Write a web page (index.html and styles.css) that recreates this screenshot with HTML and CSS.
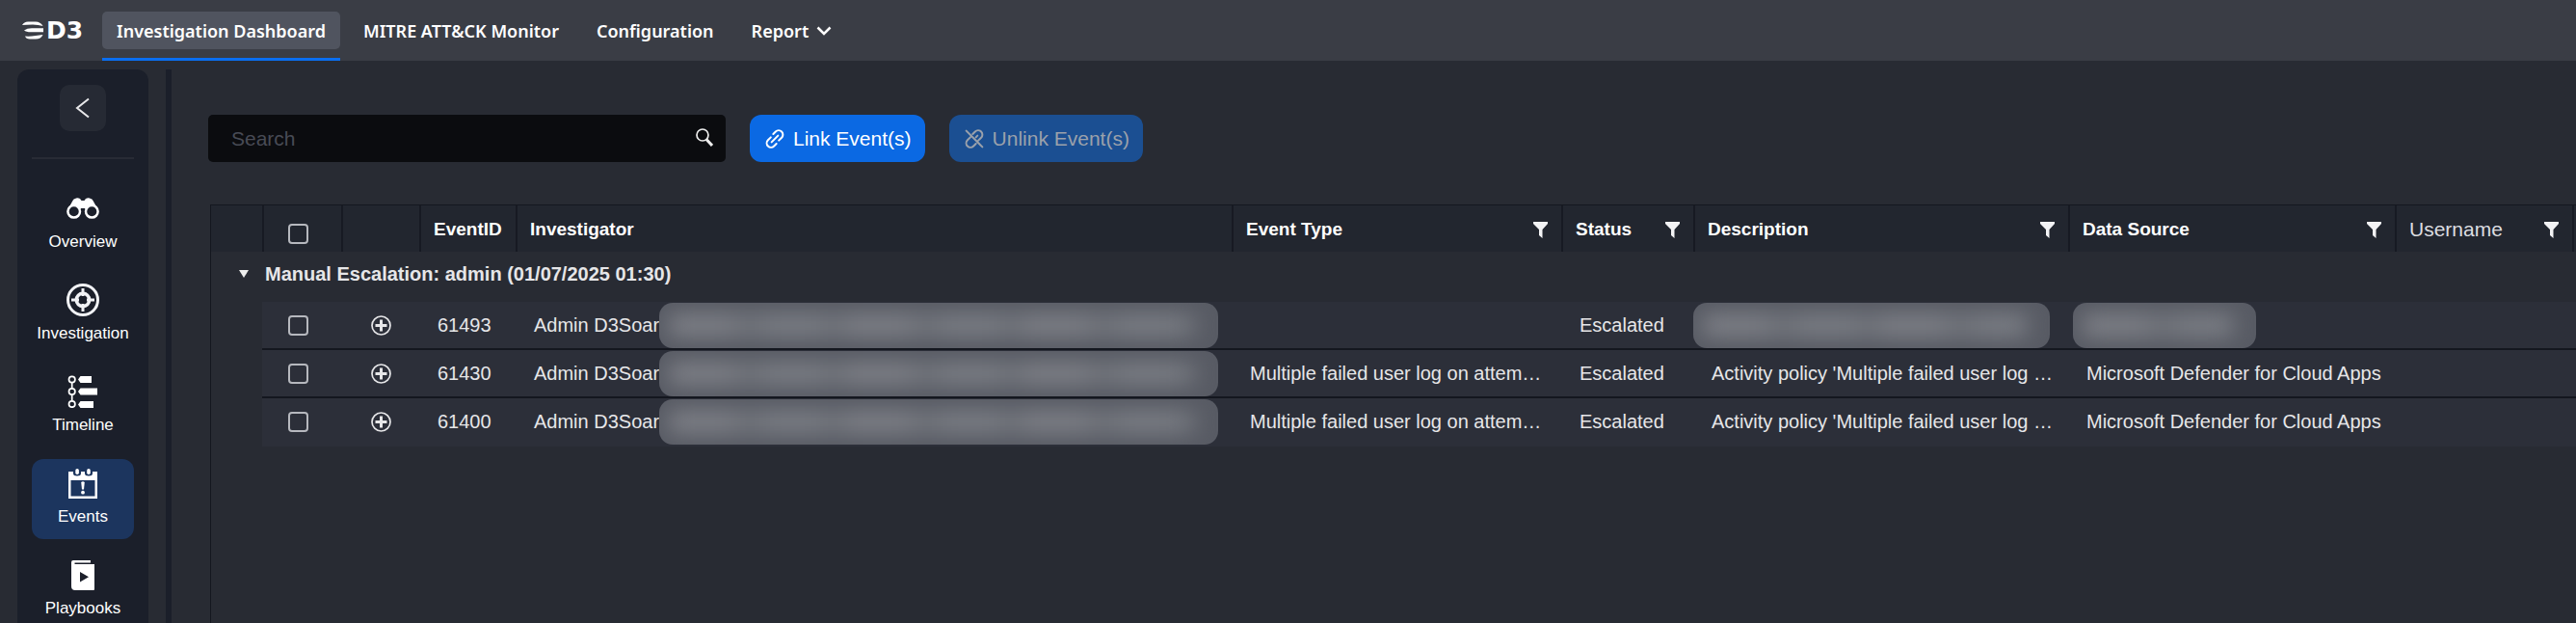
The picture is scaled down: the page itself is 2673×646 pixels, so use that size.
FILE: index.html
```html
<!DOCTYPE html>
<html lang="en">
<head>
    <meta charset="UTF-8">
    <meta name="viewport" content="width=device-width, initial-scale=1.0">
    <title>D3 Investigation Dashboard</title>
    <link rel="stylesheet" href="styles.css">
</head>
<body>
<svg class="sprite" width="0" height="0" aria-hidden="true">
    <symbol id="filter" viewBox="0 0 15 17">
        <path d="M0 0h15v2L9.500 8v9L6 14V8L0 2z" fill="currentColor"/>
    </symbol>
    <symbol id="plus" viewBox="0 0 21 21">
        <circle cx="10.500" cy="10.500" r="9.500" fill="none" stroke="currentColor" stroke-width="1.700"/>
        <path d="M10.500 4.500v12M4.500 10.500h12" stroke="currentColor" stroke-width="3"/>
    </symbol>
</svg>

<header class="topbar">
    <a class="logo" href="#" aria-label="D3 home">
        <svg width="24" height="19" viewBox="0 0 24 19" fill="#fff">
            <path d="M0 4Q2 .5 6 .5h8q5 0 7.500 4.500Q17 3.500 11 3.500 4 3.500 0 4z"/>
            <path d="M2 9.500Q5 7.300 10 7.300h12v4H9q-5 0-7-1.800z"/>
            <path d="M3 15.500q3 .3 7 0 6-.7 11.500-1.500-2 4.500-7.500 4.500H8q-4 0-5-3z"/>
        </svg>
        <span>D3</span>
    </a>
    <nav class="tabs">
        <a class="tab active" href="#"><span>Investigation Dashboard</span></a>
        <a class="tab" href="#"><span>MITRE ATT&amp;CK Monitor</span></a>
        <a class="tab" href="#"><span>Configuration</span></a>
        <a class="tab" href="#"><span>Report
            <svg width="16" height="10" viewBox="0 0 16 10"><path d="M1.500 1.500L8 8l6.500-6.500" fill="none" stroke="#fff" stroke-width="2.500"/></svg></span></a>
    </nav>
</header>

<div class="layout">
    <aside class="sidebar">
        <button class="collapse" type="button" aria-label="Collapse menu">
            <svg width="16" height="22" viewBox="0 0 16 22"><path d="M14 1.500L2 11l12 9.500" fill="none" stroke="#e8e8ea" stroke-width="2"/></svg>
        </button>
        <nav class="side-nav">
            <a class="side-item" href="#">
                <svg width="34" height="34" viewBox="0 0 34 34" fill="#fff">
                    <path d="M9 7q2-1.500 5 0l1.500 2h3L20 7q3-1.500 5 0 1.500 0 2.500 2l5 9-12 1-1.500-2h-4l-1.500 2-12-1 5-9q1-2 2.500-2z"/>
                    <g fill="#1b1f2a" stroke="#fff" stroke-width="2.500"><circle cx="7.700" cy="20.300" r="6.300"/><circle cx="26.300" cy="20.300" r="6.300"/></g>
                </svg>
                <span>Overview</span>
            </a>
            <a class="side-item" href="#">
                <svg width="34" height="34" viewBox="0 0 34 34" fill="none" stroke="#f1f2f5">
                    <circle cx="17" cy="17" r="15.500" stroke-width="3"/>
                    <circle cx="17" cy="17" r="6.700" stroke-width="3.500"/>
                    <path d="M17 5v8M17 21v8M5 17h8M21 17h8" stroke-width="3"/>
                </svg>
                <span>Investigation</span>
            </a>
            <a class="side-item" href="#">
                <svg width="34" height="34" viewBox="0 0 34 34" fill="#fff">
                    <path d="M12 4.500L14.500 1H26v7H14.500zM12 17l2.500-3.500H32v7H14.500zM12 30.500l2.500-3.500H28v7H14.500z"/>
                    <g fill="none" stroke="#fff" stroke-width="1.700"><circle cx="5.700" cy="4.500" r="3.200"/><circle cx="5.700" cy="17" r="3.200"/><circle cx="5.700" cy="30" r="3.200"/><path d="M5.700 8v6M5.700 20.500v6"/></g>
                </svg>
                <span>Timeline</span>
            </a>
            <a class="side-item active" href="#">
                <svg width="34" height="34" viewBox="0 0 34 34" fill="#fff">
                    <path fill-rule="evenodd" d="M2 5h5v2q0 2.500 4 2.500T15 7V5h4v2q0 2.500 4 2.500T27 7V5h5v28H2zM4.500 14v16.500h25V14z"/>
                    <rect x="9.300" y="2" width="3.600" height="6" rx="1.800"/>
                    <rect x="21.200" y="2" width="3.600" height="6" rx="1.800"/>
                    <path d="M15.200 16q1.800-1.500 3.600 0l-.8 7.500h-2z"/>
                    <circle cx="17" cy="26.700" r="1.900"/>
                </svg>
                <span>Events</span>
            </a>
            <a class="side-item" href="#">
                <svg width="34" height="34" viewBox="0 0 34 34" fill="#fff">
                    <path fill-rule="evenodd" d="M7 2h18v2.500H8.500V6H29v26q0 1-1 1H9q-4 0-4-4V4q0-2 2-2zM14 14v10.500l9-5.200z"/>
                </svg>
                <span>Playbooks</span>
            </a>
        </nav>
    </aside>

    <div class="rail"></div>

    <main class="content">
        <div class="toolbar">
            <div class="search">
                <input type="text" placeholder="Search" aria-label="Search">
                <button type="button" aria-label="Run search">
                    <svg width="18" height="19" viewBox="0 0 18 19" fill="none" stroke="#eee"><circle cx="7" cy="7" r="6" stroke-width="1.700"/><path d="M11 11.500l6 6.500" stroke-width="3"/></svg>
                </button>
            </div>
            <button class="btn" type="button">
                <svg width="20" height="20" viewBox="0 0 24 24" fill="none" stroke="currentColor" stroke-width="2.400" stroke-linecap="round"><path d="M8 16l8-8"/><path d="M10 6l3-3a5 5 0 0 1 7.500 7.500l-3.500 3.500M14 18l-3 3a5 5 0 0 1-7.500-7.500L7 10"/></svg>
                Link Event(s)
            </button>
            <button class="btn" type="button" disabled>
                <svg width="20" height="20" viewBox="0 0 24 24" fill="none" stroke="currentColor" stroke-width="2.400" stroke-linecap="round"><path d="M14 10l2-2"/><path d="M10 6l3-3a5 5 0 0 1 7.500 7.500l-3.500 3.500M14 18l-3 3a5 5 0 0 1-7.500-7.500L7 10M2 2l20 20"/></svg>
                Unlink Event(s)
            </button>
        </div>

        <div class="grid">
            <table>
                <colgroup>
                    <col class="c-toggle"><col class="c-check"><col class="c-expand"><col class="c-id"><col>
                    <col class="c-type"><col class="c-status"><col class="c-desc"><col class="c-source"><col class="c-user"><col class="c-end">
                </colgroup>
                <thead>
                <tr>
                    <th></th>
                    <th class="head-check"><input type="checkbox" aria-label="Select all events"></th>
                    <th></th>
                    <th>EventID</th>
                    <th>Investigator</th>
                    <th><div class="head">Event Type <svg width="15" height="17"><use href="#filter"/></svg></div></th>
                    <th><div class="head">Status <svg width="15" height="17"><use href="#filter"/></svg></div></th>
                    <th><div class="head">Description <svg width="15" height="17"><use href="#filter"/></svg></div></th>
                    <th><div class="head">Data Source <svg width="15" height="17"><use href="#filter"/></svg></div></th>
                    <th class="plain"><div class="head">Username <svg width="15" height="17"><use href="#filter"/></svg></div></th>
                    <th></th>
                </tr>
                </thead>
                <tbody>
                <tr class="group">
                    <td class="toggle"><svg width="10" height="8" viewBox="0 0 10 8"><path d="M0 0h10L5 8z" fill="#eee"/></svg></td>
                    <td colspan="10">Manual Escalation: admin (01/07/2025 01:30)</td>
                </tr>
                <tr class="event">
                    <td class="blank"></td>
                    <td class="tick"><input type="checkbox" aria-label="Select event 61493"></td>
                    <td class="expand"><svg width="21" height="21"><use href="#plus"/></svg></td>
                    <td>61493</td>
                    <td><div class="person">Admin D3Soar<span class="masked"></span></div></td>
                    <td></td>
                    <td>Escalated</td>
                    <td class="mask-desc"><div class="masked"></div></td>
                    <td class="mask-source"><div class="masked"></div></td>
                    <td></td>
                    <td></td>
                </tr>
                <tr class="event">
                    <td class="blank"></td>
                    <td class="tick"><input type="checkbox" aria-label="Select event 61430"></td>
                    <td class="expand"><svg width="21" height="21"><use href="#plus"/></svg></td>
                    <td>61430</td>
                    <td><div class="person">Admin D3Soar<span class="masked"></span></div></td>
                    <td>Multiple failed user log on attem…</td>
                    <td>Escalated</td>
                    <td>Activity policy 'Multiple failed user log …</td>
                    <td>Microsoft Defender for Cloud Apps</td>
                    <td></td>
                    <td></td>
                </tr>
                <tr class="event">
                    <td class="blank"></td>
                    <td class="tick"><input type="checkbox" aria-label="Select event 61400"></td>
                    <td class="expand"><svg width="21" height="21"><use href="#plus"/></svg></td>
                    <td>61400</td>
                    <td><div class="person">Admin D3Soar<span class="masked"></span></div></td>
                    <td>Multiple failed user log on attem…</td>
                    <td>Escalated</td>
                    <td>Activity policy 'Multiple failed user log …</td>
                    <td>Microsoft Defender for Cloud Apps</td>
                    <td></td>
                    <td></td>
                </tr>
                </tbody>
            </table>
        </div>
    </main>
</div>
</body>
</html>
```
FILE: styles.css
```css
* {
    margin: 0;
    padding: 0;
    box-sizing: border-box;
}

body {
    height: 100vh;
    display: flex;
    flex-direction: column;
    overflow: hidden;
    background: #282b33;
    color: #e6e6e8;
    font-family: "Liberation Sans", Arial, sans-serif;
    font-size: 20px;
}

a {
    color: #fff;
    text-decoration: none;
}

button, input {
    font-family: inherit;
    border: none;
}

svg {
    flex: none;
}

.sprite {
    position: absolute;
}

/* Top bar */
.topbar {
    flex: none;
    display: flex;
    height: 63px;
    padding-left: 23px;
    background: #3a3d45;
}

.logo {
    display: flex;
    align-items: center;
    gap: 1px;
    width: 83px;
    font-family: "DejaVu Sans", sans-serif;
    font-size: 25px;
    font-weight: bold;
}

.tabs {
    display: flex;
    gap: 9px;
    font-family: "Noto Sans", "Segoe UI", sans-serif;
    font-size: 18px;
    font-weight: 600;
}

.tab {
    padding: 12px 0 9px;
    border-bottom: 3px solid transparent;
}

.tab span {
    display: flex;
    align-items: center;
    gap: 8px;
    height: 39px;
    padding: 0 15px;
    border-radius: 5px;
}

.tab.active {
    border-color: #0a6ef0;
}

.tab.active span {
    background: #50545f;
}

/* Sidebar */
.layout {
    flex: 1;
    min-height: 0;
    display: flex;
    padding: 9px 0 0 18px;
}

.sidebar {
    flex: none;
    width: 136px;
    padding: 16px 15px 0;
    border-radius: 12px 12px 0 0;
    background: #1b1f2a;
    overflow: hidden;
}

.collapse {
    display: flex;
    align-items: center;
    justify-content: center;
    width: 48px;
    height: 48px;
    margin: 0 auto 27px;
    border-radius: 10px;
    background: #262a34;
}

.side-nav {
    display: flex;
    flex-direction: column;
    gap: 12px;
    padding-top: 26px;
    border-top: 2px solid #282b35;
}

.side-item {
    display: flex;
    flex-direction: column;
    align-items: center;
    gap: 8px;
    padding: 8px 0 13px;
    border-radius: 12px;
    font-size: 17px;
    line-height: 20px;
}

.side-item.active {
    background: #1c355e;
}

.rail {
    flex: none;
    width: 6px;
    margin-left: 18px;
    background: #1b1f2a;
}

/* Content */
.content {
    flex: 1;
    min-width: 0;
    display: flex;
    flex-direction: column;
    padding: 47px 0 0 38px;
}

.toolbar {
    display: flex;
    gap: 25px;
    margin-bottom: 44px;
}

.search {
    display: flex;
    width: 537px;
    height: 49px;
    border-radius: 5px;
    background: #0b0c0f;
}

.search input {
    flex: 1;
    min-width: 0;
    padding-left: 24px;
    background: none;
    color: #e6e6e8;
    font-size: 21px;
}

.search input::placeholder {
    color: #484b55;
}

.search button {
    padding: 0 13px;
    background: none;
}

.btn {
    display: flex;
    align-items: center;
    gap: 9px;
    padding: 0 14px 0 16px;
    border-radius: 12px;
    background: #0b69e3;
    color: #fff;
    font-size: 21px;
}

.btn:disabled {
    background: #1b4f92;
    color: #9ba1ab;
}

/* Event table */
.grid {
    flex: 1;
    margin-left: 2px;
    border-top: 1px solid #14171f;
    border-left: 1px solid #14171f;
}

table {
    width: 100%;
    table-layout: fixed;
    border-collapse: separate;
    border-spacing: 0;
}

.c-toggle { width: 53px; }
.c-check { width: 82px; }
.c-expand { width: 81px; }
.c-id { width: 100px; }
.c-type { width: 342px; }
.c-status { width: 137px; }
.c-desc { width: 389px; }
.c-source { width: 339px; }
.c-user { width: 184px; }
.c-end { width: 4px; }

th {
    height: 48px;
    padding: 2px 14px 0 13px;
    border-left: 2px solid #171a23;
    background: #22262f;
    color: #fff;
    font-size: 19px;
    text-align: left;
}

th:first-child {
    border-left: none;
}

th:last-child {
    padding: 0;
}

th.plain {
    color: #dcdde0;
    font-size: 21px;
    font-weight: normal;
}

.head {
    display: flex;
    align-items: center;
    justify-content: space-between;
}

.head svg {
    color: #f3f3f5;
}

th.head-check {
    padding: 14px 0 4px 25px;
}

.group td {
    height: 52px;
    padding: 0 3px 6px;
    font-weight: bold;
}

.group .toggle {
    padding: 0 14px 12px 0;
    text-align: right;
}

.event td {
    height: 50px;
    padding: 0 0 0 19px;
    border-bottom: 2px solid #14171f;
    background: #2c2f39;
    white-space: nowrap;
}

.event:last-child td {
    border-bottom-color: #2c2f39;
}

.event .blank {
    background: none;
    border: none;
}

.event td.tick {
    padding: 0 0 0 27px;
}

.event td.expand {
    padding: 0 0 0 31px;
}

.expand svg {
    display: block;
}

input[type="checkbox"] {
    appearance: none;
    display: block;
    width: 21px;
    height: 21px;
    border: 2px solid #b6b8be;
    border-radius: 4px;
}

.person {
    display: flex;
    align-items: center;
    height: 47px;
    padding-right: 14px;
}

/* Masked values: a rounded plate with smeared text behind it */
.masked {
    position: relative;
    display: block;
    height: 47px;
    border-radius: 14px;
    background: #585b64;
    overflow: hidden;
}

.masked::before {
    content: "";
    position: absolute;
    inset: 12px 24px 12px 10px;
    background: repeating-linear-gradient(90deg, #7f8188 0 58px, #73767d 78px 90px, #7c7f86 106px 150px, #73767d 170px 184px);
    filter: blur(11px);
}

.person .masked {
    flex: 1;
}

.event td.mask-desc {
    padding: 0 19px 0 0;
}

.event td.mask-source {
    padding: 0 144px 0 5px;
}
```
